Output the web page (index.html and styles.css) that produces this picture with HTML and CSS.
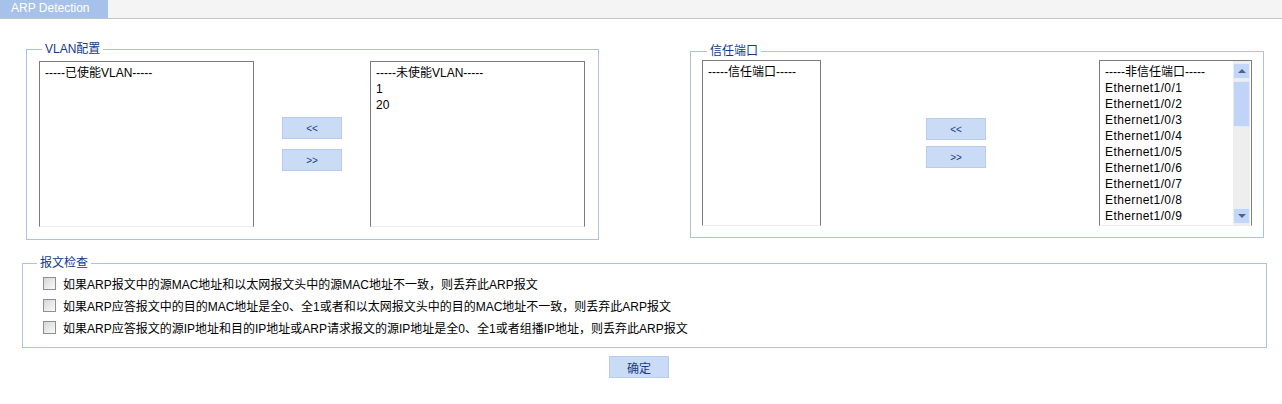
FILE: index.html
```html
<!DOCTYPE html>
<html lang="zh-CN">
<head>
<meta charset="UTF-8">
<title>ARP Detection</title>
<link rel="stylesheet" href="styles.css">
</head>
<body>
<div class="tabbar">
    <span class="tab">ARP Detection</span>
</div>

<div class="page">
    <div class="groups">
        <fieldset class="group vlan">
            <legend>VLAN配置</legend>
            <div class="transfer">
                <div class="listbox wide">
                    <div class="items">
                        <div>-----已使能VLAN-----</div>
                    </div>
                </div>
                <div class="moves gap10">
                    <button class="btn">&lt;&lt;</button>
                    <button class="btn">&gt;&gt;</button>
                </div>
                <div class="listbox wide">
                    <div class="items">
                        <div>-----未使能VLAN-----</div>
                        <div>1</div>
                        <div>20</div>
                    </div>
                </div>
            </div>
        </fieldset>

        <fieldset class="group port">
            <legend>信任端口</legend>
            <div class="transfer">
                <div class="listbox narrow">
                    <div class="items">
                        <div>-----信任端口-----</div>
                    </div>
                </div>
                <div class="moves gap6">
                    <button class="btn">&lt;&lt;</button>
                    <button class="btn">&gt;&gt;</button>
                </div>
                <div class="listbox ports">
                    <div class="items">
                        <div>-----非信任端口-----</div>
                        <div class="eth">Ethernet1/0/1</div>
                        <div class="eth">Ethernet1/0/2</div>
                        <div class="eth">Ethernet1/0/3</div>
                        <div class="eth">Ethernet1/0/4</div>
                        <div class="eth">Ethernet1/0/5</div>
                        <div class="eth">Ethernet1/0/6</div>
                        <div class="eth">Ethernet1/0/7</div>
                        <div class="eth">Ethernet1/0/8</div>
                        <div class="eth">Ethernet1/0/9</div>
                    </div>
                    <div class="scrollbar">
                        <div class="sb-btn"><span class="arrow up"></span></div>
                        <div class="sb-track"><div class="sb-thumb"></div></div>
                        <div class="sb-btn"><span class="arrow down"></span></div>
                    </div>
                </div>
            </div>
        </fieldset>
    </div>

    <fieldset class="group check">
        <legend>报文检查</legend>
        <div class="rows">
            <label class="row"><span class="box"></span>如果ARP报文中的源MAC地址和以太网报文头中的源MAC地址不一致，则丢弃此ARP报文</label>
            <label class="row"><span class="box"></span>如果ARP应答报文中的目的MAC地址是全0、全1或者和以太网报文头中的目的MAC地址不一致，则丢弃此ARP报文</label>
            <label class="row"><span class="box"></span>如果ARP应答报文的源IP地址和目的IP地址或ARP请求报文的源IP地址是全0、全1或者组播IP地址，则丢弃此ARP报文</label>
        </div>
    </fieldset>

    <div class="submit">
        <button class="btn ok">确定</button>
    </div>
</div>
</body>
</html>
```

FILE: styles.css
```css
* { margin: 0; padding: 0; box-sizing: border-box; }
body {
    background: #fff;
    color: #000;
    font-family: "Liberation Sans", "Noto Sans CJK SC", sans-serif;
    font-size: 12px;
}
.tabbar {
    height: 19px;
    background: #f4f4f4;
    border-bottom: 1px solid #c4c4c4;
}
.tab {
    display: inline-block;
    width: 108px;
    height: 18px;
    line-height: 17px;
    padding-left: 11px;
    background: #a7c2ea;
    color: #fff;
}
.page {
    padding-top: 23px;
}
.groups {
    display: flex;
    align-items: center;
    margin-left: 26px;
    gap: 91px;
}
.group {
    border: 1px solid #a9c1e9;
}
.group legend {
    padding: 0 3px;
    line-height: 14px;
    color: #0f3a8a;
}
.vlan {
    width: 573px;
    padding: 5px 13px 12px 12px;
}
.vlan legend { margin-left: 3px; }
.port {
    width: 574px;
    padding: 2px 11px 11px 11px;
}
.port legend { margin-left: 5px; }
.transfer {
    display: flex;
    align-items: center;
}
.listbox {
    height: 166px;
    border: 1px solid #7c7c7c;
    border-bottom-color: #ececec;
    background: #fff;
    overflow: hidden;
    display: flex;
}
.items {
    flex: 1;
    padding: 3px 0 0 5px;
    line-height: 16px;
    white-space: nowrap;
}
.eth { letter-spacing: 0.4px; }
.wide { width: 215px; }
.narrow { width: 119px; }
.ports { width: 153px; }
.vlan .moves { margin: 0 28px; }
.port .moves { margin-left: 105px; margin-right: 113px; }
.moves {
    display: flex;
    flex-direction: column;
}
.gap10 { gap: 10px; }
.gap6 { gap: 6px; }
.btn {
    width: 60px;
    height: 22px;
    background: #c9dbf5;
    border: 1px solid #b7cced;
    color: #1b3a88;
    font-family: "Liberation Sans", "Noto Sans CJK SC", sans-serif;
    font-size: 10px;
}
.scrollbar {
    width: 17px;
    margin-right: 1px;
    padding: 2px 0 1px;
    display: flex;
    flex-direction: column;
    background: #eeeeee;
}
.sb-btn {
    height: 16px;
    background: #c3d6f9;
    border: 1px solid #e6edfb;
    display: flex;
    align-items: center;
    justify-content: center;
}
.sb-track {
    flex: 1;
    padding-top: 2px;
}
.sb-thumb {
    height: 46px;
    background: #c1d4f8;
    border: 1px solid #e2eafa;
}
.arrow {
    width: 0;
    height: 0;
    border-left: 4px solid transparent;
    border-right: 4px solid transparent;
}
.arrow.up { border-bottom: 4px solid #4f6287; }
.arrow.down { border-top: 4px solid #4f6287; }
.check {
    margin: 16px 0 0 22px;
    width: 1245px;
    padding: 2px 0 9px 14px;
}
.check legend { margin-left: 0; }
.rows {
    padding-left: 6px;
}
.row {
    display: flex;
    align-items: center;
    height: 22px;
}
.box {
    width: 13px;
    height: 13px;
    margin-right: 7px;
    border: 1px solid #8e8f8f;
    background: linear-gradient(135deg, #d6d6d6, #fafafa);
}
.submit {
    margin-top: 8px;
    padding-left: 609px;
}
.ok {
    font-size: 12px;
}
```
